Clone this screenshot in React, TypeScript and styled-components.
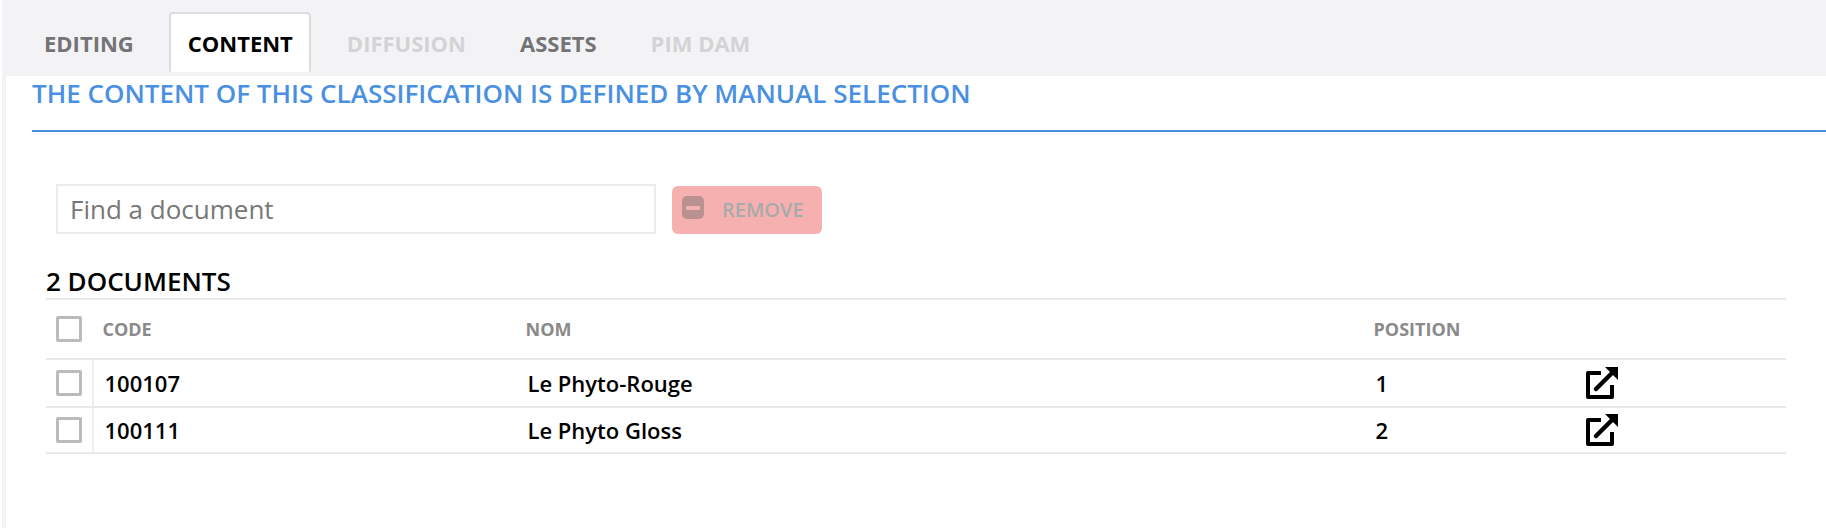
import React from 'react';
import styled, { createGlobalStyle } from 'styled-components';

const GlobalStyle = createGlobalStyle`
  html, body {
    margin: 0;
    padding: 0;
    background: #fff;
  }
  body {
    font-family: "Open Sans", "Liberation Sans", sans-serif;
  }
`;

const tabs = [
  { label: 'EDITING', state: 'normal' },
  { label: 'CONTENT', state: 'active' },
  { label: 'DIFFUSION', state: 'disabled' },
  { label: 'ASSETS', state: 'normal' },
  { label: 'PIM DAM', state: 'disabled' },
];

const documents = [
  { code: '100107', name: 'Le Phyto-Rouge', position: 1 },
  { code: '100111', name: 'Le Phyto Gloss', position: 2 },
];

const OpenIcon = () => (
  <svg width="32" height="32" viewBox="0 0 32 32" fill="none">
    <path d="M15 6H2V30H26V18" stroke="#000" strokeWidth="4" strokeLinejoin="round" />
    <path d="M10 22L26 6" stroke="#000" strokeWidth="4.500" strokeLinecap="round" />
    <path d="M19 0H32V13Z" fill="#000" />
  </svg>
);

const App = () => {
  return (
    <Page>
      <GlobalStyle />
      <ScrollMark />
      <TabBar>
        {tabs.map((tab) => (
          <Tab key={tab.label} $state={tab.state}>
            {tab.label}
          </Tab>
        ))}
      </TabBar>
      <Main>
        <Title>THE CONTENT OF THIS CLASSIFICATION IS DEFINED BY MANUAL SELECTION</Title>
        <Toolbar>
          <SearchInput placeholder="Find a document" />
          <RemoveButton>
            <MinusBox />
            REMOVE
          </RemoveButton>
        </Toolbar>
        <Count>2 DOCUMENTS</Count>
        <Table>
          <HeaderRow>
            <CheckCell>
              <Check />
            </CheckCell>
            <HeadCell>CODE</HeadCell>
            <HeadCell>NOM</HeadCell>
            <HeadCell>POSITION</HeadCell>
            <span />
          </HeaderRow>
          {documents.map((doc) => (
            <Row key={doc.code}>
              <CheckCell $divided>
                <Check />
              </CheckCell>
              <Cell>{doc.code}</Cell>
              <Cell>{doc.name}</Cell>
              <Cell>{doc.position}</Cell>
              <IconCell>
                <OpenIcon />
              </IconCell>
            </Row>
          ))}
        </Table>
      </Main>
    </Page>
  );
};

export default App;

const Page = styled.div`
  position: relative;
  width: 1826px;
  height: 528px;
  box-sizing: border-box;
  border-left: 2px solid #fff;
  overflow: hidden;
  background: #f3f3f5;
  display: flex;
  flex-direction: column;
`;

const ScrollMark = styled.div`
  position: absolute;
  left: -2px;
  top: 232px;
  width: 2px;
  height: 38px;
  background: #cfe3fb;
`;

const TabBar = styled.div`
  height: 76px;
  flex: none;
  box-sizing: border-box;
  padding: 12px 0 0 23.500px;
  display: flex;
  align-items: flex-start;
`;

const Tab = styled.div<{ $state: string }>`
  box-sizing: border-box;
  height: 60px;
  padding: 0 16.500px;
  margin-right: 17px;
  display: flex;
  align-items: center;
  font-size: 22px;
  font-weight: 700;
  color: ${(p) =>
    p.$state === 'active' ? '#000' : p.$state === 'disabled' ? '#d3d3d5' : '#747476'};
  background: ${(p) => (p.$state === 'active' ? '#fff' : 'transparent')};
  border: 2px solid ${(p) => (p.$state === 'active' ? '#dcdcde' : 'transparent')};
  border-bottom: none;
  border-radius: 4px 4px 2px 2px;
`;

const Main = styled.div`
  flex: 1;
  margin-left: 4px;
  background: #fff;
  padding-left: 26px;
`;

const Title = styled.div`
  height: 56px;
  box-sizing: border-box;
  padding-top: 1px;
  font-size: 26px;
  line-height: 33px;
  font-weight: 600;
  color: #4a90e2;
  border-bottom: 2px solid #4a90e2;
`;

const Toolbar = styled.div`
  display: flex;
  align-items: flex-end;
  gap: 16px;
  margin: 52px 0 0 24px;
`;

const SearchInput = styled.input`
  box-sizing: border-box;
  width: 600px;
  height: 50px;
  padding: 0 12px;
  border: 2px solid #ececec;
  outline: none;
  font-family: inherit;
  font-size: 26px;
  color: #777;

  &::placeholder {
    color: #777;
    opacity: 1;
  }
`;

const RemoveButton = styled.div`
  box-sizing: border-box;
  width: 150px;
  height: 48px;
  padding: 0 0 2px 10px;
  display: flex;
  align-items: center;
  gap: 18px;
  border-radius: 6px;
  background: #f7b0b0;
  color: #a6abab;
  font-size: 20px;
  font-weight: 600;
`;

const MinusBox = styled.span`
  width: 22px;
  height: 23px;
  margin-top: -3px;
  border-radius: 5px;
  background: #b99191;
  display: flex;
  align-items: center;
  justify-content: center;

  &::after {
    content: '';
    width: 14px;
    height: 4px;
    border-radius: 1px;
    background: #f7b0b0;
  }
`;

const Count = styled.div`
  margin: 30px 0 0 14px;
  height: 34px;
  font-size: 26px;
  line-height: 34px;
  font-weight: 600;
  color: #000;
`;

const Table = styled.div`
  width: 1740px;
  margin: 0 0 0 14px;
  border-top: 2px solid #e8e8e8;
`;

const columns = '48px 423px 848px 212px 1fr';

const HeaderRow = styled.div`
  display: grid;
  grid-template-columns: ${columns};
  height: 58px;
  align-items: center;
  border-bottom: 2px solid #e8e8e8;
`;

const Row = styled.div`
  display: grid;
  grid-template-columns: ${columns};
  height: 46px;
  align-items: center;
  border-bottom: 2px solid #e8e8e8;

  &:last-child {
    height: 44px;
  }
`;

const CheckCell = styled.div<{ $divided?: boolean }>`
  height: 100%;
  box-sizing: border-box;
  padding-left: 10px;
  display: flex;
  align-items: center;
  border-right: ${(p) => (p.$divided ? '2px solid #eee' : 'none')};
`;

const Check = styled.span`
  width: 26px;
  height: 26px;
  flex: none;
  box-sizing: border-box;
  border: 3px solid #bbb;
  border-radius: 2px;
  background: #fff;
`;

const HeadCell = styled.div`
  padding-left: 8.500px;
  font-size: 18px;
  font-weight: 700;
  color: #8a8a8a;
`;

const Cell = styled.div`
  padding-left: 10.500px;
  font-size: 22px;
  font-weight: 600;
  color: #000;
`;

const IconCell = styled.div`
  padding-left: 9px;
  display: flex;
  align-items: center;
`;
